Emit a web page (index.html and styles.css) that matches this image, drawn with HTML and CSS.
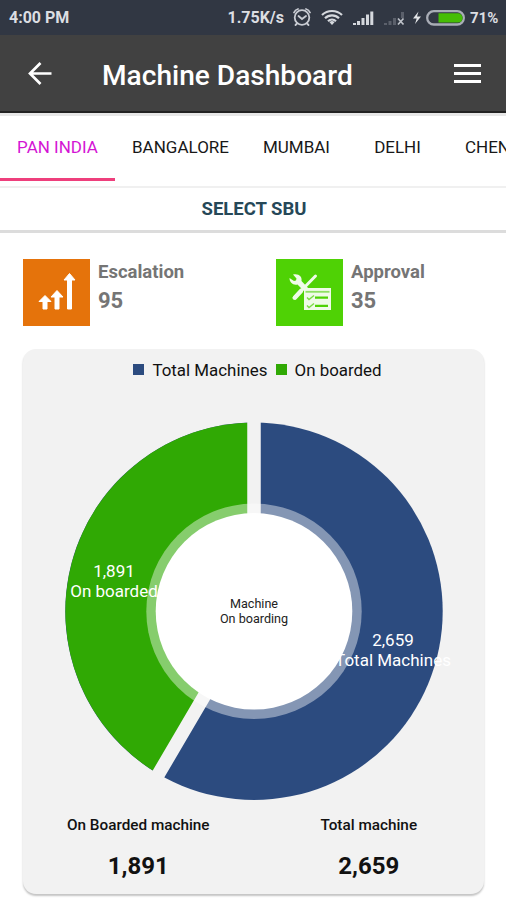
FILE: index.html
```html
<!DOCTYPE html>
<html lang="en">
<head>
    <meta charset="UTF-8">
    <meta name="viewport" content="width=device-width, initial-scale=1.0">
    <title>Machine Dashboard</title>
    <link rel="stylesheet" href="styles.css">
</head>
<body>
    <div class="status-bar">
        <span class="status-time">4:00 PM</span>
        <span class="status-speed">1.75K/s</span>
        <svg class="status-icons" width="182" height="35" viewBox="288 0 182 35">
            <g fill="none" stroke="#c9ccd3" stroke-width="1.8" stroke-linecap="round">
                <circle cx="302" cy="17.500" r="7.300"/>
                <path d="M298.500 16l3.500 3 4-3M294 12.500a6 6 0 0 1 4-3.500M310 12.500a6 6 0 0 0-4-3.500M297 23.500l-1.500 1.500M307 23.500l1.500 1.500"/>
            </g>
            <g fill="none" stroke="#d5d8dd" stroke-width="2.200">
                <path d="M322 15a14.500 14.500 0 0 1 20 0M325 18.300a10 10 0 0 1 14 0M328 21.300a5.800 5.800 0 0 1 8 0"/>
                <path d="M332 25l-2.500-2.700a3.500 3.500 0 0 1 5 0z" fill="#d5d8dd" stroke="none"/>
            </g>
            <path d="M353 25v-2h3v2zM357 25v-4h3v4zM361.500 25v-7h3v7zM366 25v-10.500h3v10.500zM370.300 25V11.500h3V25z" fill="#d5d8dd"/>
            <path d="M384 25v-2h3v2zM388.500 25v-4h3v4zM393 25v-7h3v7zM401 18v-6h3v6z" fill="#5b606b"/>
            <path d="M398 18.500l5.500 6M403.500 18.500l-5.500 6" stroke="#bfc3ca" stroke-width="1.700"/>
            <path d="M418.500 11.500l-5.500 7h3.700l-1.700 5.500 6-7.500h-4z" fill="#e3e5e8"/>
            <rect x="427.200" y="11.200" width="36.600" height="13.300" rx="6.600" fill="none" stroke="#a9adb6" stroke-width="2.300"/>
            <path d="M438.500 13.300H458a4.500 4.500 0 0 1 0 9.200h-19.500z" fill="#46bd05"/>
        </svg>
        <span class="status-percent">71%</span>
    </div>

    <header class="app-bar">
        <svg class="back-icon" width="24" height="24" viewBox="0 0 24 24">
            <path d="M12.500 2L2 12.500l10.500 10.500M2.500 12.500H23.500" fill="none" stroke="#fff" stroke-width="2.700"/>
        </svg>
        <h1>Machine Dashboard</h1>
        <div class="menu-icon">
            <span></span>
            <span></span>
            <span></span>
        </div>
    </header>

    <nav class="tabs">
        <a class="tab tab-active">PAN INDIA</a>
        <a class="tab tab-wide">BANGALORE</a>
        <a class="tab">MUMBAI</a>
        <a class="tab">DELHI</a>
        <a class="tab tab-last">CHENNAI</a>
    </nav>

    <div class="sbu">SELECT SBU</div>

    <div class="summary">
        <div class="summary-item">
            <svg width="67" height="67" viewBox="0 0 67 67">
                <rect width="67" height="67" fill="#e5730b"/>
                <g fill="#fff" stroke="#fff" stroke-width="1" stroke-linejoin="round">
                    <path d="M22 36.500l6 6h-4v7.500h-4v-7.500h-4z"/>
                    <path d="M34 31.500l6 6.500h-4v12h-4V38h-4z"/>
                    <path d="M46.500 14.500l5.500 6.500h-3.500v29h-4V21H41z"/>
                </g>
            </svg>
            <div class="summary-text">
                <span class="label">Escalation</span>
                <span class="value">95</span>
            </div>
        </div>
        <div class="summary-item">
            <svg width="67" height="67" viewBox="0 0 67 67">
                <rect width="67" height="67" fill="#4fd205"/>
                <path d="M39.500 17L18 39" stroke="#effbe8" stroke-width="3" stroke-linecap="round"/>
                <path d="M25 32l-6 6.500" stroke="#effbe8" stroke-width="4.500" stroke-linecap="round"/>
                <path d="M17 15.500l3.500 4-.5 2-2 .5-4.500-3c0 4.500 3.500 7.500 8 6.500L30 34l3.500-3.500-8-8.500c1-4.500-3-8-8.500-6.500z" fill="#effbe8"/>
                <rect x="28" y="29" width="27" height="22" fill="#effbe8"/>
                <path d="M29.500 32.800h24" stroke="#8fe064" stroke-width="1.800"/>
                <path d="M39 38.700h13M39 46.800h13" stroke="#4fd205" stroke-width="2.300"/>
                <path d="M31 38.500l2 2 5-4M31 46.500l2 2 5-4" fill="none" stroke="#7bdc45" stroke-width="1.400"/>
            </svg>
            <div class="summary-text">
                <span class="label">Approval</span>
                <span class="value">35</span>
            </div>
        </div>
    </div>

    <div class="card">
        <div class="legend">
            <i class="swatch blue"></i><span>Total Machines</span>
            <i class="swatch green"></i><span>On boarded</span>
        </div>
        <svg class="chart" width="461" height="400" viewBox="-231 -200.300 461 400">
            <circle r="188.700" fill="#2c4b7f"/>
            <path d="M0 0L-95.500 162.700A188.700 188.700 0 0 1 0-188.700z" fill="#30a904"/>
            <!-- gaps between the slices -->
            <path d="M0-192V0L-97.200 165.600" fill="none" stroke="#f2f2f2" stroke-width="13.500"/>
            <circle r="107.700" fill="#fff" fill-opacity="0.420"/>
            <circle r="98.300" fill="#fff"/>
            <g class="slice-text">
                <text x="-140" y="-34.500">1,891</text>
                <text x="-140" y="-14">On boarded</text>
                <text x="139" y="34.500">2,659</text>
                <text x="139" y="55">Total Machines</text>
            </g>
            <g class="center-text">
                <text x="0" y="-3">Machine</text>
                <text x="0" y="12">On boarding</text>
            </g>
        </svg>
        <div class="totals">
            <div class="total">
                <span class="total-label">On Boarded machine</span>
                <span class="total-value">1,891</span>
            </div>
            <div class="total">
                <span class="total-label">Total machine</span>
                <span class="total-value">2,659</span>
            </div>
        </div>
    </div>
</body>
</html>
```
FILE: styles.css
```css
* {
    box-sizing: border-box;
}
body {
    margin: 0;
    width: 506px;
    height: 900px;
    overflow: hidden;
    background-color: #fff;
    font-family: Roboto, "Liberation Sans", sans-serif;
    white-space: nowrap;
}
.status-bar {
    display: flex;
    align-items: center;
    height: 35px;
    padding: 0 8px 0 9px;
    background-color: #313743;
    color: #dcdee2;
    font-size: 16px;
    font-weight: 700;
}
.status-speed {
    margin-left: auto;
    margin-right: 4px;
}
.status-icons {
    flex: none;
}
.status-percent {
    width: 28px;
    font-size: 15px;
}
.app-bar {
    display: flex;
    align-items: center;
    height: 78px;
    padding: 0 25px 0 28px;
    background-color: #414141;
    border-bottom: 2px solid #222;
}
.app-bar h1 {
    margin: 4px 0 0 50px;
    color: #fff;
    font-size: 28.1px;
    font-weight: 500;
}
.menu-icon {
    display: flex;
    flex-direction: column;
    gap: 5px;
    width: 27px;
    margin-left: auto;
}
.menu-icon span {
    height: 3px;
    background-color: #fff;
}
.tabs {
    display: flex;
    height: 75px;
    border-top: 3px solid #e7e7e7;
    border-bottom: 2px solid #f0f0f0;
    overflow: hidden;
}
.tab {
    flex: none;
    width: 101px;
    height: 65px;
    padding-top: 2px;
    line-height: 59px;
    text-align: center;
    color: #181818;
    font-size: 17px;
}
.tab-wide {
    width: 131px;
}
.tab-last {
    padding-left: 17px;
    text-align: left;
}
.tab-active {
    width: 115px;
    color: #d414d4;
    border-bottom: 3px solid #ee3f7c;
}
.sbu {
    height: 45px;
    line-height: 42px;
    border-bottom: 3px solid #dcdcdc;
    text-align: center;
    color: #264858;
    font-size: 18.5px;
    font-weight: 700;
    padding-left: 2px;
}
.summary {
    display: grid;
    grid-template-columns: 253px 1fr;
    padding: 26px 0 23px 23px;
}
.summary-item {
    display: flex;
    gap: 8px;
    height: 67px;
}
.summary-text {
    display: flex;
    flex-direction: column;
    color: #757575;
    font-weight: 700;
}
.label {
    font-size: 18.5px;
    line-height: 27px;
}
.value {
    font-size: 22px;
    line-height: 29px;
}
.card {
    width: 461px;
    height: 545px;
    margin-left: 23px;
    background-color: #f2f2f2;
    border-radius: 13px;
    box-shadow: 0 2px 2px #c4c4c4;
}
.legend {
    display: flex;
    align-items: center;
    justify-content: center;
    height: 41px;
    padding-left: 8px;
    color: #111;
    font-size: 16.9px;
}
.swatch {
    width: 11px;
    height: 11px;
    margin: 0 8px;
}
.swatch.blue {
    margin-left: 0;
}
.blue {
    background-color: #2c4b7f;
}
.green {
    background-color: #30a904;
}
.chart {
    display: block;
    margin-top: 21px;
}
.slice-text {
    fill: #fff;
    font-size: 17px;
    text-anchor: middle;
}
.center-text {
    fill: #222;
    font-size: 12.6px;
    text-anchor: middle;
}
.totals {
    display: grid;
    grid-template-columns: 1fr 1fr;
}
.total {
    display: flex;
    flex-direction: column;
    align-items: center;
    color: #111;
}
.total-label {
    font-size: 15.3px;
    font-weight: 500;
    line-height: 28px;
}
.total-value {
    margin-top: 12px;
    font-size: 24px;
    font-weight: 700;
    line-height: 30px;
}
```
